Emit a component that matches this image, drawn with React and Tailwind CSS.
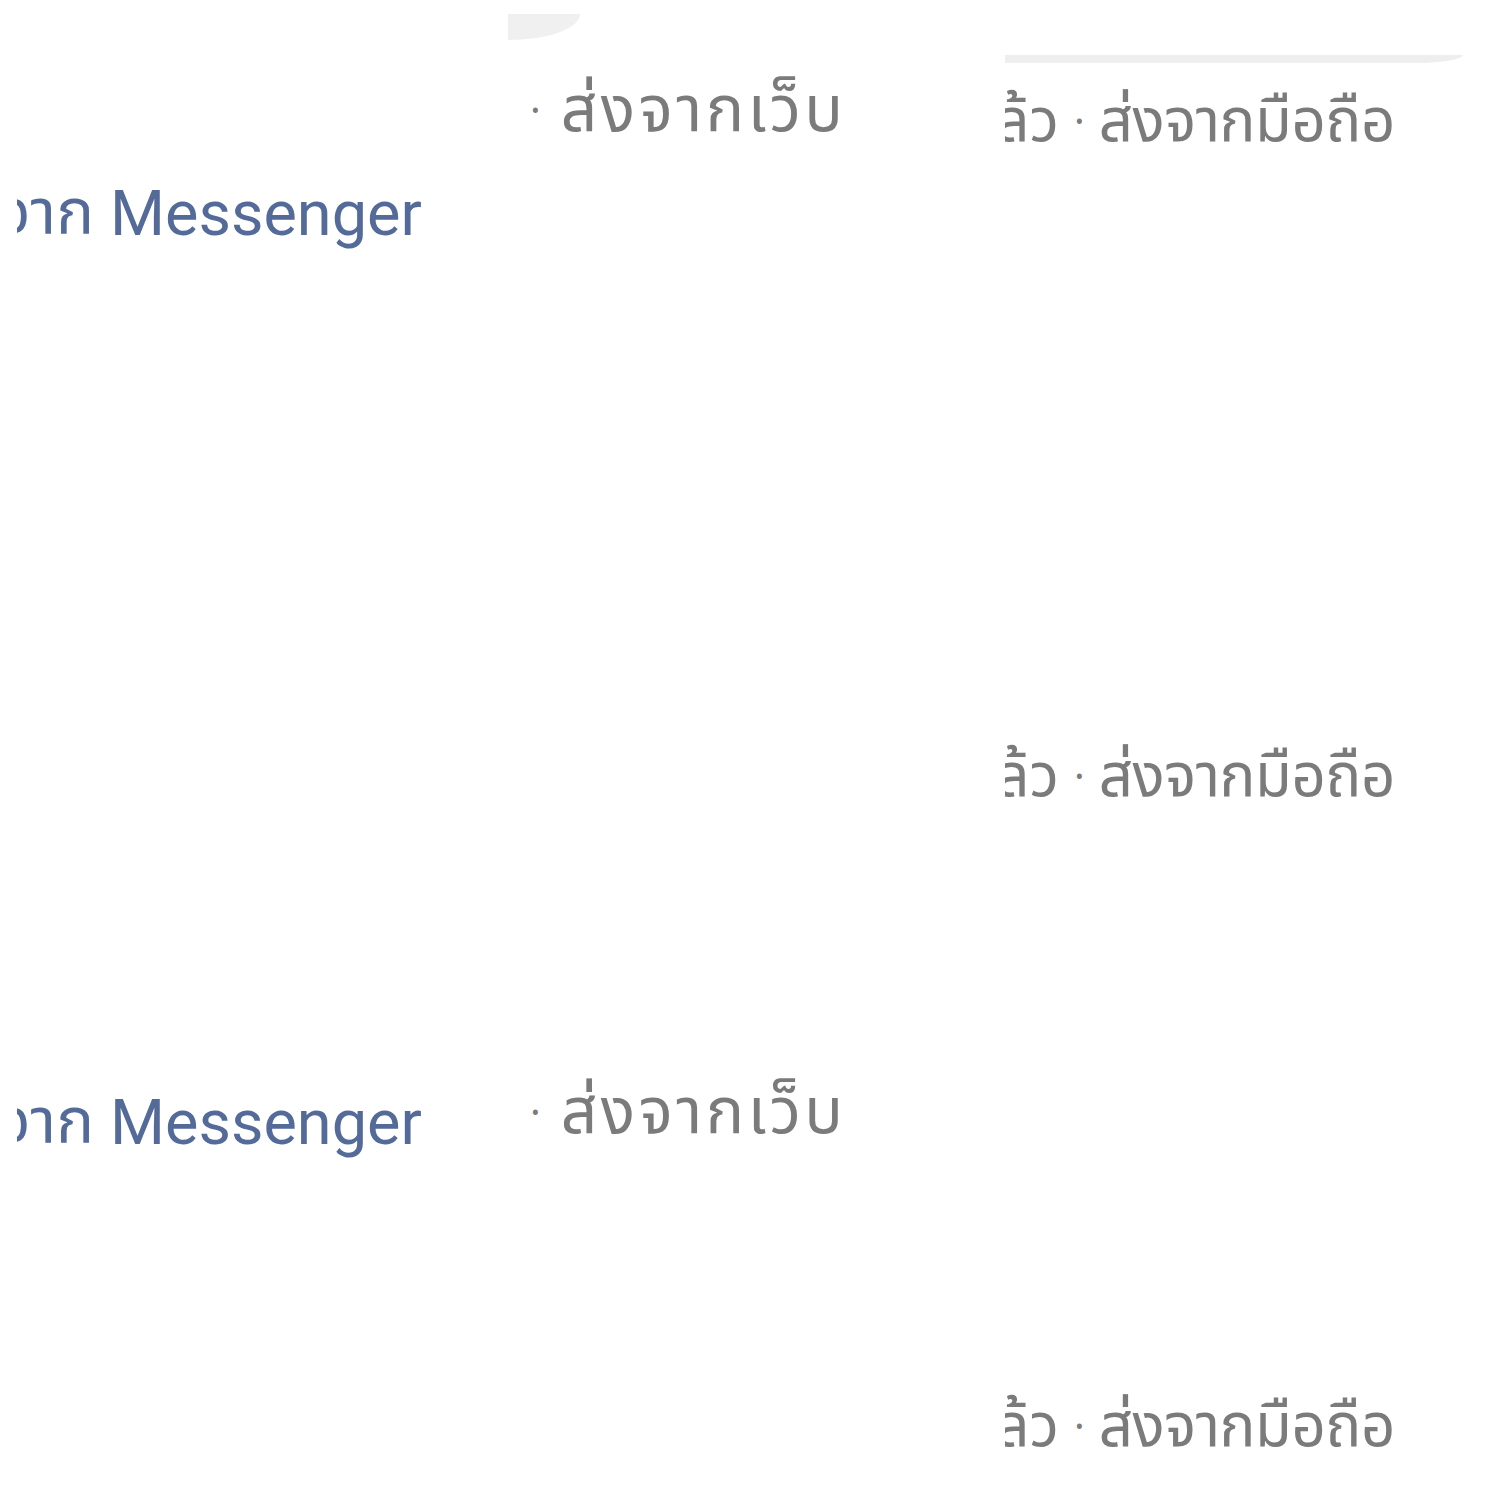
import React from 'react';

const thaiFont = { fontFamily: '"Noto Sans Thai", "Noto Sans", Roboto, sans-serif' };

const MessengerLine = ({ className }) => (
  <div className={`flex items-center whitespace-nowrap text-[63px] leading-[80px] text-[#546b99] ${className}`}>
    {/* clipped prefix, only the tail of it shows */}
    <div className="ml-[17px] flex w-[77px] shrink-0 justify-end overflow-hidden">
      <span style={thaiFont}>ส่งจาก</span>
    </div>
    <span className="ml-[16px]" style={{ fontFamily: 'Roboto, "Noto Sans", sans-serif' }}>
      Messenger
    </span>
  </div>
);

const WebLine = ({ className }) => (
  <div
    className={`flex items-center whitespace-nowrap pl-[22px] text-[64px] leading-[80px] text-[#7b7b7b] ${className}`}
    style={thaiFont}
  >
    <span className="text-[40px]">·</span>
    <span className="ml-[20px] tracking-[3.5px]">ส่งจากเว็บ</span>
  </div>
);

const MobileLine = ({ className }) => (
  <div
    className={`flex items-center whitespace-nowrap text-[60px] leading-[80px] text-[#7b7b7b] ${className}`}
    style={thaiFont}
  >
    <div className="flex w-[54px] shrink-0 justify-end overflow-hidden">
      <span>แล้ว</span>
    </div>
    <span className="ml-[15px] text-[40px]">·</span>
    <span className="ml-[14px] tracking-[-0.5px]">ส่งจากมือถือ</span>
  </div>
);

export default function App() {
  return (
    <div className="flex h-[1500px] w-[1500px] overflow-hidden bg-white">
      {/* left strip */}
      <div className="flex w-[508px] shrink-0 flex-col overflow-hidden">
        <MessengerLine className="mt-[174px]" />
        <MessengerLine className="mt-[829px]" />
      </div>

      {/* middle strip */}
      <div className="flex w-[497px] shrink-0 flex-col overflow-hidden">
        <div className="mt-[14px] h-[26px] w-[72px] rounded-br-[72px_26px] bg-[#f0f0f0]" />
        <WebLine className="mt-[32px]" />
        <WebLine className="mt-[922px]" />
      </div>

      {/* right strip */}
      <div className="flex flex-1 flex-col overflow-hidden">
        <div className="mt-[55px] h-[8px] w-[458px] rounded-br-[50px_8px] bg-[#eeeeee]" />
        <MobileLine className="mt-[20px]" />
        <MobileLine className="mt-[575px]" />
        <MobileLine className="mt-[570px]" />
      </div>
    </div>
  );
}
